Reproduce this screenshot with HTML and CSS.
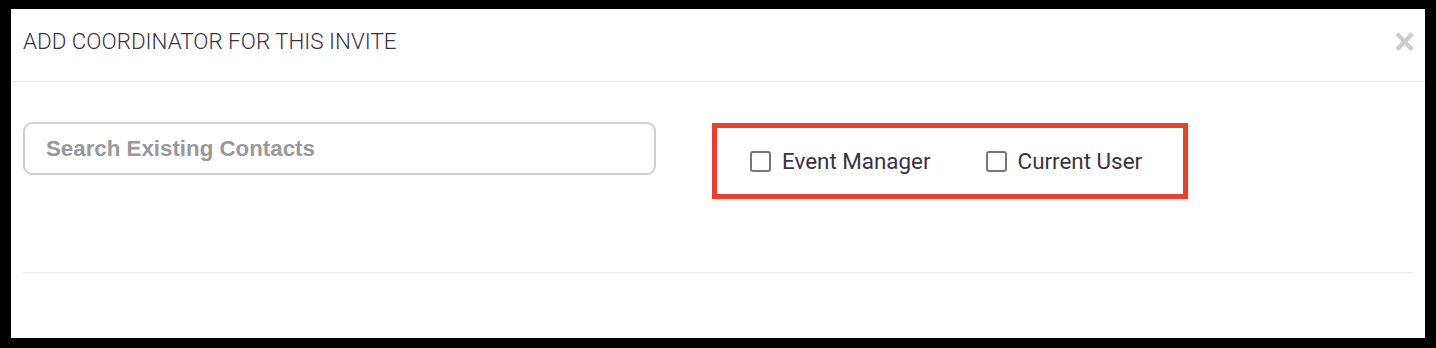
FILE: index.html
```html
<!DOCTYPE html>
<html lang="en">
<head>
  <meta charset="UTF-8" />
  <meta name="viewport" content="width=device-width, initial-scale=1.0" />
  <title>Add Coordinator</title>
  <link rel="stylesheet" href="styles.css">
</head>
<body>
  <div class="modal">
    <div class="modal-header">
      <h4 class="modal-title">ADD COORDINATOR FOR THIS INVITE</h4>
      <button class="close" type="button">&times;</button>
    </div>
    <div class="modal-body">
      <div class="row">
        <input class="search" type="text" placeholder="Search Existing Contacts" />
        <div class="options">
          <label class="check"><span class="box"></span>Event Manager</label>
          <label class="check"><span class="box"></span>Current User</label>
        </div>
      </div>
      <hr class="divider" />
    </div>
  </div>
</body>
</html>
```

FILE: styles.css
```css
body {
  margin: 0;
  padding: 9px 11px 10px 11px;
  background: #000;
  font-family: Roboto, "Liberation Sans", sans-serif;
}

.modal {
  background: #fff;
  height: 329px;
}

.modal-header {
  display: flex;
  align-items: center;
  justify-content: space-between;
  height: 64px;
  padding: 0 12px 8px 12px;
  border-bottom: 1px solid #e5e5e5;
}

.modal-title {
  margin: 0;
  font-size: 22.4px;
  font-weight: 300;
  color: #3b3144;
}

.close {
  background: none;
  border: none;
  padding: 0;
  margin: 2px -2px 0 0;
  font-family: "Liberation Sans", Arial, sans-serif;
  font-size: 36px;
  font-weight: bold;
  line-height: 1;
  color: #ccc;
  cursor: pointer;
}

.modal-body {
  padding: 40px 12px 0 12px;
}

.row {
  display: flex;
  align-items: flex-start;
}

.search {
  width: 633px;
  height: 53px;
  box-sizing: border-box;
  border: 2px solid #d0d0d0;
  border-radius: 9px;
  padding: 0 21px;
  font-family: "Liberation Sans", Arial, sans-serif;
  font-size: 22.3px;
  font-weight: bold;
  color: #555;
  outline: none;
}

.search::placeholder {
  color: #999;
}

.options {
  display: flex;
  align-items: center;
  gap: 55px;
  margin-left: 56px;
  margin-top: 1px;
  height: 76px;
  box-sizing: border-box;
  width: 476px;
  padding-left: 33px;
  border: 5px solid #e8412c;
}

.check {
  display: flex;
  align-items: center;
  gap: 11px;
  font-size: 22.4px;
  color: #3b3144;
}

.box {
  width: 17px;
  height: 17px;
  border: 2px solid #777;
  border-radius: 3px;
}

.divider {
  margin: 73px 0 0 0;
  border: none;
  border-top: 1px solid #eee;
}
```
